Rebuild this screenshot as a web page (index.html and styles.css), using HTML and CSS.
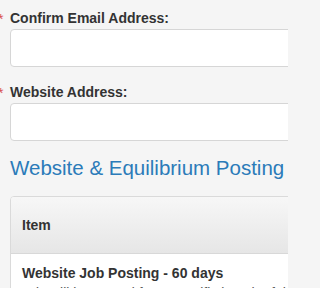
FILE: index.html
```html
<!DOCTYPE html>
<html>
<head>
<meta charset="utf-8">
<link rel="stylesheet" href="styles.css">
</head>
<body>
<div class="page">
  <div class="inner">
    <div class="group">
      <label class="label"><span class="req">*</span>Confirm Email Address:</label>
      <div class="input"></div>
    </div>
    <div class="group">
      <label class="label"><span class="req">*</span>Website Address:</label>
      <div class="input"></div>
    </div>
    <h2 class="title">Website &amp; Equilibrium Posting</h2>
    <div class="panel">
      <div class="panel-head">Item</div>
      <div class="panel-body">
        <div class="item-name">Website Job Posting - 60 days</div>
        <div class="item-desc">Ads will be posted for a specific length of time on the job board</div>
      </div>
    </div>
  </div>
</div>
</body>
</html>
```
FILE: styles.css
```css
html, body {
  margin: 0;
  padding: 0;
  overflow: hidden;
  background: #f5f5f5;
  width: 288px;
  height: 288px;
}
body {
  font-family: "Liberation Sans", Arial, sans-serif;
  font-size: 14px;
  line-height: 20px;
  color: #333;
}
.page {
  width: 288px;
  height: 288px;
  overflow: hidden;
}
.inner {
  padding: 8px 0 0 10px;
  margin-right: -60px;
}
.group {
  margin-bottom: 15px;
}
.label {
  display: block;
  font-weight: bold;
  margin-bottom: 1px;
  position: relative;
}
.req {
  position: absolute;
  left: -12px;
  top: 1px;
  color: #d9534f;
  font-weight: normal;
}
.input {
  height: 36px;
  background: #fff;
  border: 1px solid #d6d6d6;
  border-radius: 4px;
}
.title {
  margin: 2px 0 16px;
  font-size: 20.5px;
  line-height: 24px;
  font-weight: normal;
  color: #2b7bb9;
}
.panel {
  border: 1px solid #dadada;
  border-radius: 4px;
  background: #fff;
  overflow: hidden;
}
.panel-head {
  padding: 18px 11px;
  font-weight: bold;
  background: linear-gradient(#f7f7f7, #e6e6e6);
  border-bottom: 1px solid #d8d8d8;
}
.panel-body {
  padding: 9px 11px 8px;
}
.item-name {
  font-weight: bold;
}
.item-desc {
  color: #555;
  margin-top: 0;
}
```
